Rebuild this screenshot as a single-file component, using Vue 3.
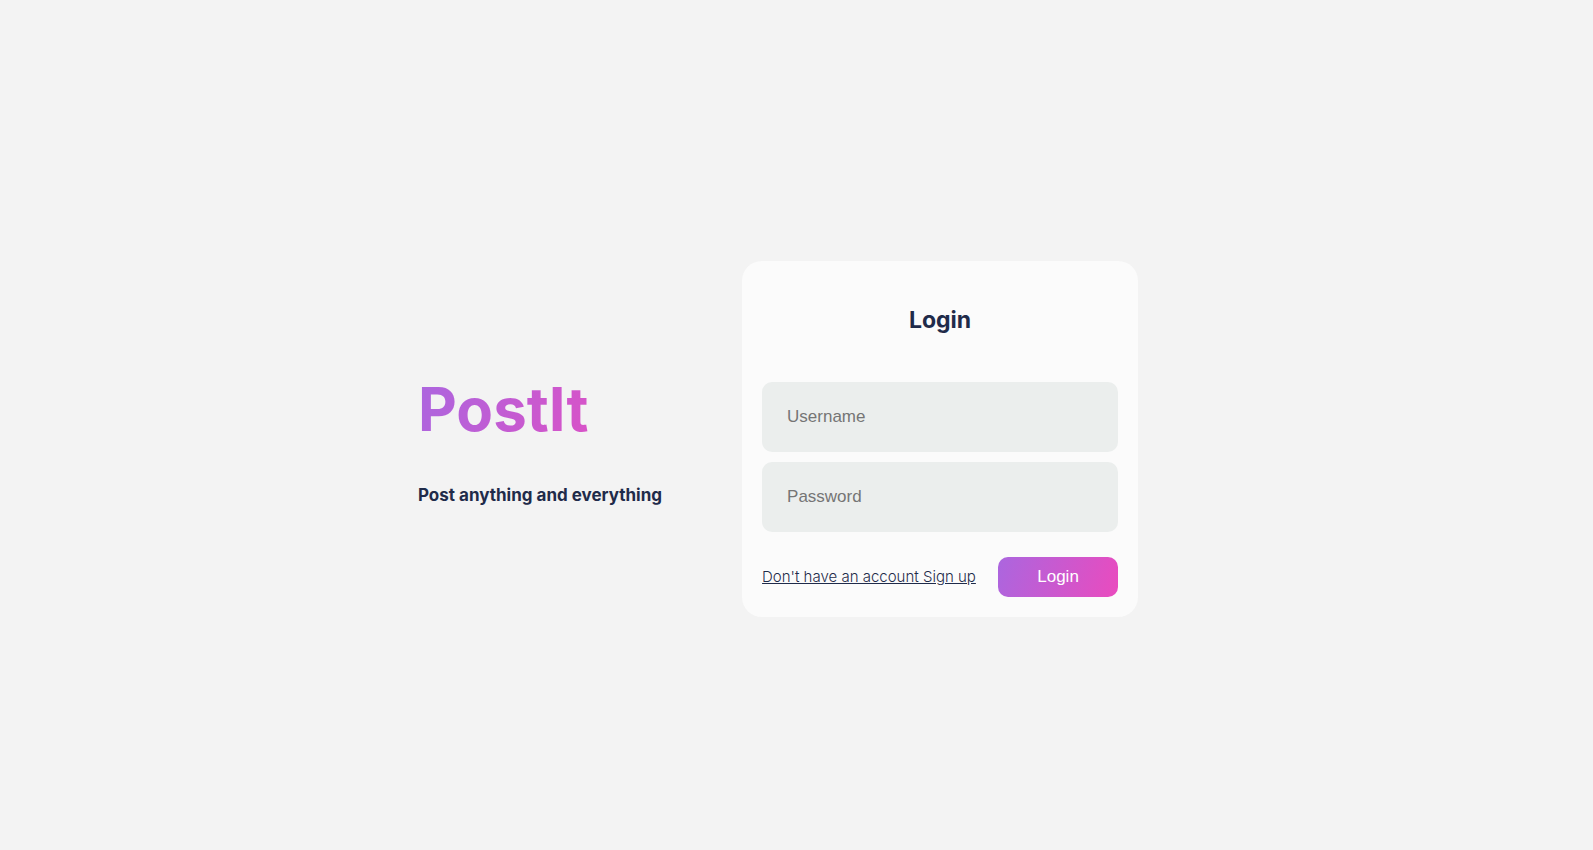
<script setup>
import { ref } from 'vue'

const username = ref('')
const password = ref('')
</script>

<template>
  <main class="page">
    <section class="intro">
      <h1 class="brand">PostIt</h1>
      <h4 class="tagline">Post anything and everything</h4>
    </section>
    <form class="card" @submit.prevent>
      <h2 class="title">Login</h2>
      <input v-model="username" class="field" type="text" placeholder="Username" aria-label="Username" />
      <input v-model="password" class="field" type="password" placeholder="Password" aria-label="Password" />
      <div class="actions">
        <a class="signup" href="#signup">Don't have an account Sign up</a>
        <button class="submit" type="submit">Login</button>
      </div>
    </form>
  </main>
</template>

<style>
body {
  background: #f3f3f3;
}
</style>

<style scoped>
.page {
  min-height: 100vh;
  box-sizing: border-box;
  padding: 28px 37px 0 0;
  display: flex;
  align-items: center;
  justify-content: center;
  gap: 80px;
  font-family: Inter, sans-serif;
  color: #1f2b4a;
}
.brand {
  margin: 0 0 40px;
  font-size: 60px;
  line-height: 72px;
  font-weight: 700;
  background: linear-gradient(108deg, #ab66df, #ea4bbe);
  background-clip: text;
  -webkit-background-clip: text;
  color: transparent;
}
.tagline {
  margin: 0;
  font-size: 17px;
  line-height: 20px;
}
.card {
  display: flex;
  flex-direction: column;
  box-sizing: border-box;
  width: 396px;
  padding: 20px;
  border-radius: 20px;
  background: #fbfbfb;
}
.title {
  margin: 25px 0 48px;
  font-size: 23px;
  line-height: 28px;
  text-align: center;
}
.field {
  box-sizing: border-box;
  width: 100%;
  height: 70px;
  margin-bottom: 10px;
  padding: 0 25px;
  border: 0;
  border-radius: 10px;
  background: #ebeeed;
  font: 17px "Liberation Sans", Arial, sans-serif;
}
.actions {
  display: flex;
  align-items: center;
  justify-content: space-between;
  margin-top: 15px;
}
.signup {
  color: inherit;
  font-size: 15px;
  line-height: 20px;
  font-weight: 300;
}
.submit {
  width: 120px;
  height: 40px;
  border: 0;
  border-radius: 10px;
  background: linear-gradient(108deg, #ab66df, #ea4bbe);
  color: #fff;
  font: 17px "Liberation Sans", Arial, sans-serif;
}
</style>
